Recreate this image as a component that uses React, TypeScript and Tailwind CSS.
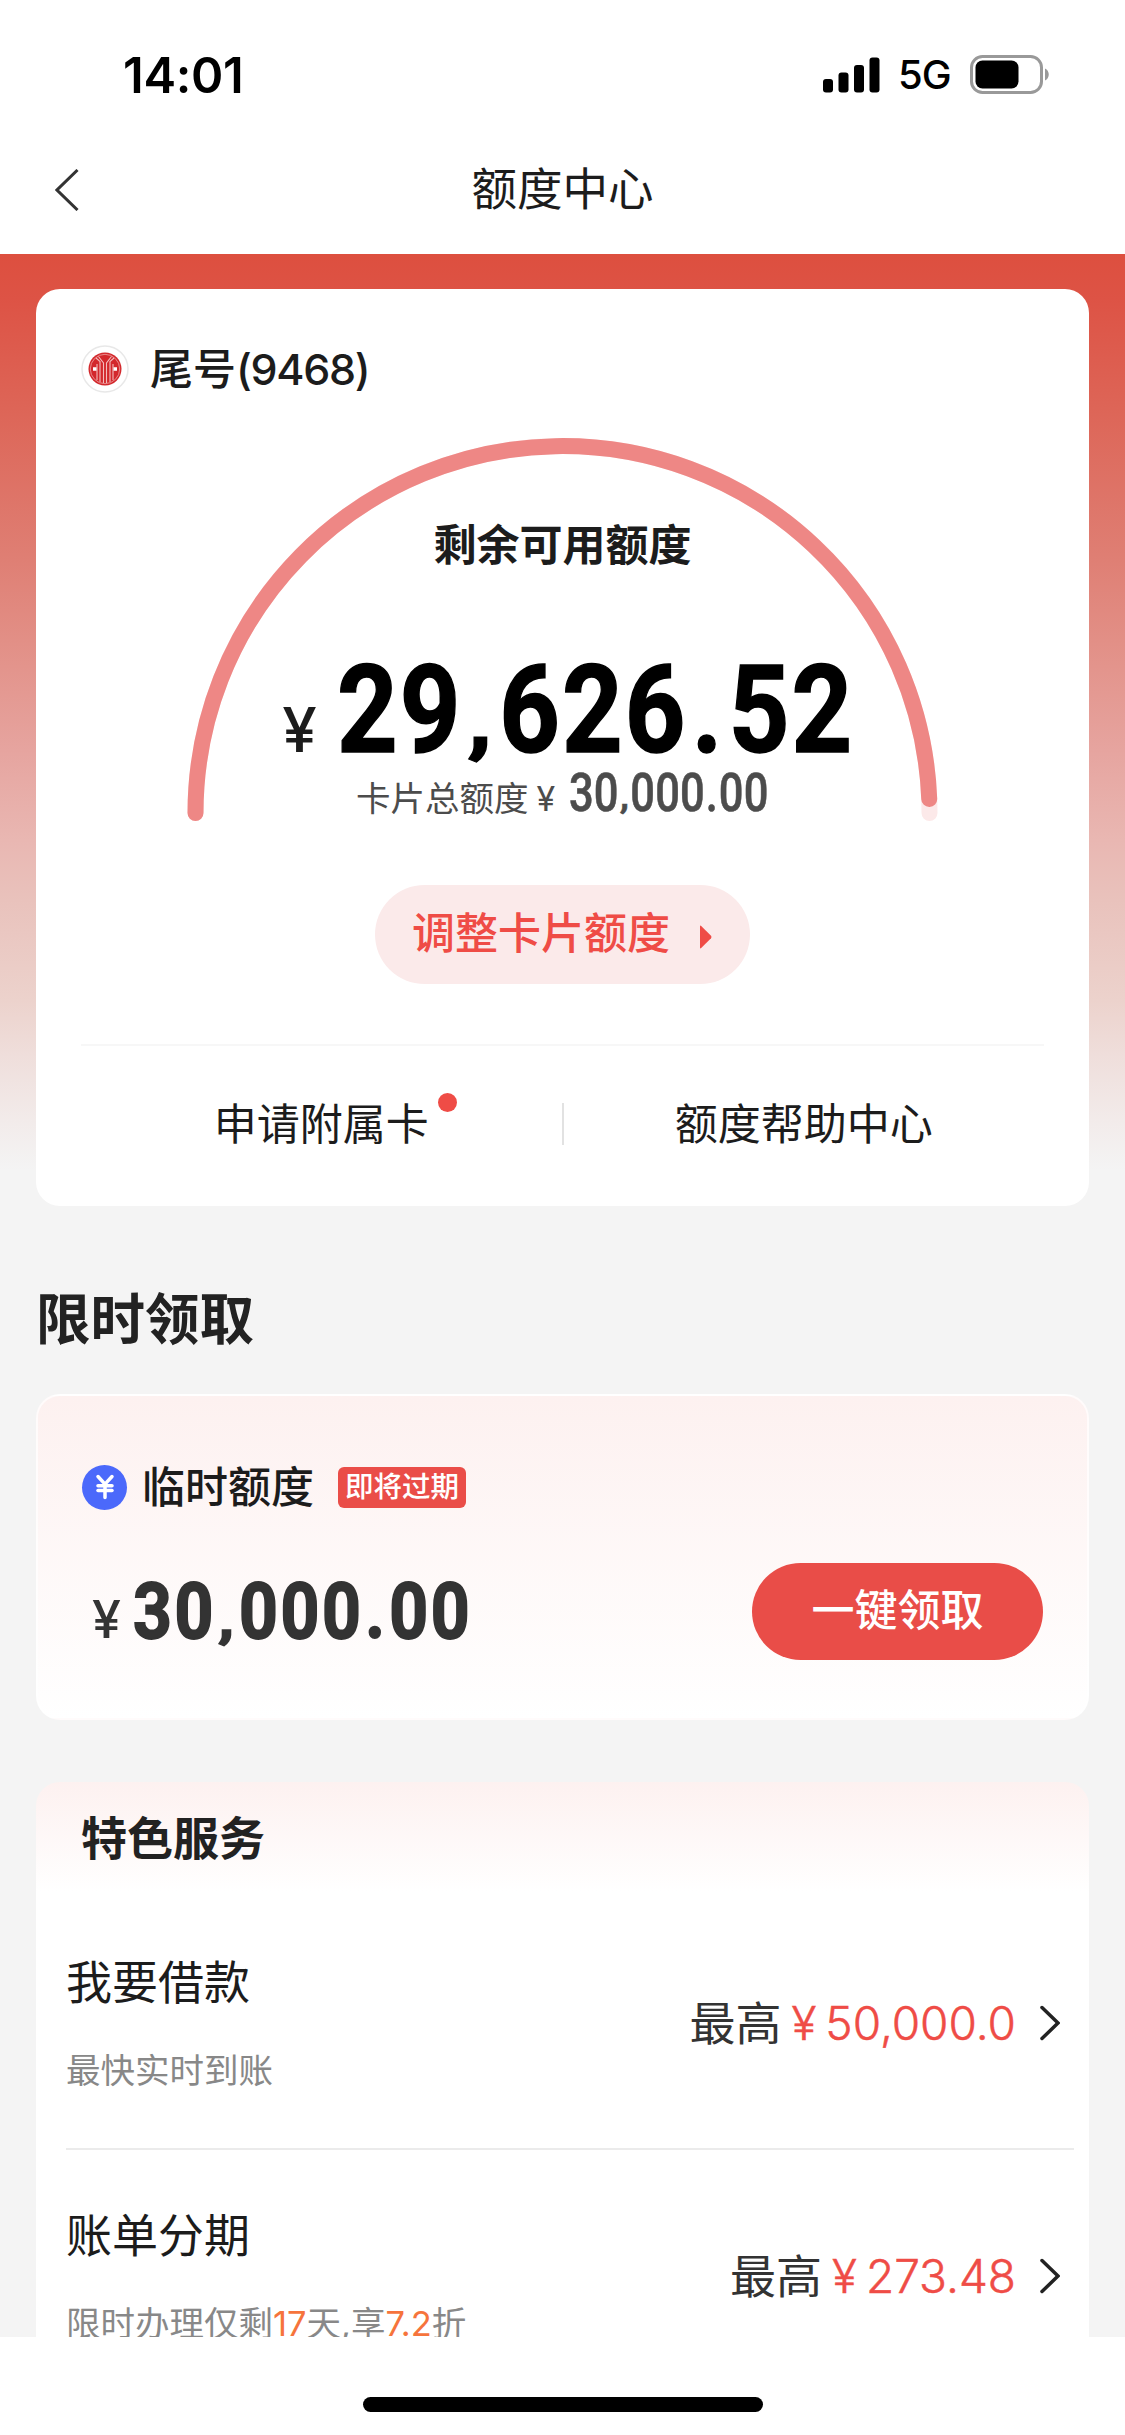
import { JapaneseYen } from "lucide-react";

interface Service {
  id: string;
  title: string;
  desc: React.ReactNode;
  amount: string;
}

const services: Service[] = [
  { id: "loan", title: "我要借款", desc: "最快实时到账", amount: "50,000.0" },
  {
    id: "bill",
    title: "账单分期",
    desc: (
      <>
        限时办理仅剩<span className="text-[#f6743c]">17</span>天,享
        <span className="text-[#f6743c]">7.2</span>折
      </>
    ),
    amount: "273.48",
  },
];

const StatusBar = () => (
  <div className="flex h-[126px] items-center justify-between pt-[24px] pr-[75px] pl-[123px]">
    <span className="text-[49px] leading-none font-semibold tracking-[-0.3px] text-black">14:01</span>
    <div className="flex items-center">
      <svg width="57" height="36" viewBox="0 0 57 36" fill="#000">
        <rect x="0" y="22" width="10" height="13.5" rx="3" />
        <rect x="15.5" y="15.5" width="10" height="20" rx="3" />
        <rect x="31" y="8" width="10" height="27.5" rx="3" />
        <rect x="46.5" y="0.5" width="10" height="35" rx="3" />
      </svg>
      <span className="ml-[18px] w-[53px] text-[40px] leading-none font-medium tracking-[-1px] text-black">5G</span>
      <svg className="ml-[19px]" width="80" height="40" viewBox="0 0 80 40">
        <rect x="1.5" y="1.5" width="70" height="36" rx="11" fill="none" stroke="#999" strokeWidth="3" />
        <rect x="5.5" y="5.5" width="43" height="28" rx="7" fill="#000" />
        <path d="M75 13.5c5 2 5 10 0 12z" fill="#999" />
      </svg>
    </div>
  </div>
);

const BankLogo = () => (
  <svg width="48" height="48" viewBox="0 0 48 48" fill="none">
    <circle cx="24" cy="24" r="23" fill="#fff" stroke="#e8e8e8" strokeWidth="1.5" />
    <circle cx="24" cy="24" r="16.5" fill="#d3282c" />
    <circle cx="24" cy="24" r="14.7" stroke="#eda5a5" strokeWidth="0.8" />
    <path
      d="M19 37V16.5L15 13M22.5 38V18L17.5 11.5M29 37V16.5L33 13M25.5 38V18L30.5 11.5M16 35V19M32 35V19"
      stroke="#f3bcbc"
      strokeWidth="1.1"
    />
    <path d="M12 24h3.5M32.5 24H36" stroke="#fff" strokeWidth="3.5" />
  </svg>
);

const Gauge = () => (
  <svg className="absolute inset-0" width="963" height="399" viewBox="0 0 963 399" fill="none" strokeWidth="16" strokeLinecap="round">
    <path d="M114.5 383a367 367 0 0 1 734 0" stroke="#fce9e9" />
    <path d="M114.5 383a367 367 0 0 1 733.73 -14" stroke="#ee8785" />
  </svg>
);

// condensed digits, with wide separators
const Amount = ({ value, className, gap }: { value: string; className: string; gap: string }) => (
  <span className={`inline-block origin-left whitespace-nowrap ${className}`}>
    {value.split(/([,.])/).map((part, i) => {
      if (part === ",") {
        return (
          <span key={i} className={`inline-block origin-[50%_70%] scale-y-[0.7] ${gap}`}>
            ,
          </span>
        );
      }
      return (
        <span key={i} className={part === "." ? gap : ""}>
          {part}
        </span>
      );
    })}
  </span>
);

const LimitCard = () => (
  <section className="rounded-[24px] bg-white px-[45px] pt-[56px] pb-1">
    <div className="flex h-12 items-center">
      <BankLogo />
      <span className="ml-[21px] text-[43px] leading-none font-medium">
        尾号<span className="tracking-[-1.3px]">(9468)</span>
      </span>
    </div>

    <div className="relative mt-[37px] flex h-[399px] flex-col items-center pt-[85px]">
      <Gauge />
      <h2 className="text-[43px] leading-[60px] font-bold">剩余可用额度</h2>
      <div className="mt-[75px] flex h-[120px] items-baseline leading-[120px]">
        <span className="mr-[20px] text-[62px] font-medium">¥</span>
        <span className="w-[506px] font-['Roboto',sans-serif] text-[123px] font-bold text-black">
          <Amount value="29,626.52" className="scale-x-[0.86] tracking-[2.4px] [-webkit-text-stroke:1.5px]" gap="px-[5px]" />
        </span>
      </div>
      <div className="flex h-[44px] items-baseline pt-px leading-[44px] text-[#4c4c4c]">
        <span className="text-[34.5px]">卡片总额度</span>
        <span className="ml-[8px] text-[34px]">¥</span>
        <span className="ml-[14px] w-[200px] font-['Roboto',sans-serif] text-[53px] font-medium">
          <Amount value="30,000.00" className="scale-x-[0.82] tracking-[0.2px] [-webkit-text-stroke:0.6px]" gap="px-[1px]" />
        </span>
      </div>
    </div>

    <button className="mx-auto mt-[56px] flex h-[99px] w-[375px] items-center rounded-full bg-[#fbeaea] pb-[2px] pl-[37px] text-[43px] font-medium text-[#ef4c46]">
      调整卡片额度
      <svg className="mt-[6px] ml-[30px]" width="12" height="24" viewBox="0 0 12 24" fill="#ef4c46">
        <path d="M0 1.5Q0 0 1.2 1L11 10.8Q12 12 11 13.2L1.2 23Q0 24 0 22.5Z" />
      </svg>
    </button>

    <div className="mt-[60px] flex h-[158px] items-center border-t-2 border-[#f7f7f7] text-[43px]">
      <div className="flex flex-1 justify-center">
        <span className="relative">
          申请附属卡
          <i className="absolute top-px -right-[28px] size-[19px] rounded-full bg-[#ef4c46]" />
        </span>
      </div>
      <div className="h-[42px] w-[2px] bg-[#e2e2e2]" />
      <div className="flex flex-1 justify-center">额度帮助中心</div>
    </div>
  </section>
);

const TempLimitCard = () => (
  <section className="mt-[40px] h-[326px] rounded-[24px] border-2 border-white/70 bg-gradient-to-b from-[#fdf1f0] to-white pt-[61px] pr-[44px] pl-[44px]">
    <div className="flex h-[60px] items-center">
      <span className="flex size-[45px] items-center justify-center rounded-full bg-[#4b69fb]">
        <JapaneseYen className="text-white" size={28} strokeWidth={3} />
      </span>
      <span className="ml-[15px] text-[43px] leading-none font-medium">临时额度</span>
      <span className="ml-[24px] flex h-[41px] w-[128px] items-center justify-center rounded-[6px] bg-[#ea4d48] text-[28.5px] font-medium text-white">
        即将过期
      </span>
    </div>
    <div className="mt-[46px] flex h-[97px] items-center justify-between">
      <div className="flex items-baseline pt-[9px] pl-[10px] leading-[97px] text-[#333]">
        <span className="mr-[12px] text-[52px] font-medium">¥</span>
        <span className="font-['Roboto',sans-serif] text-[77px] font-bold">
          <Amount value="30,000.00" className="scale-x-[0.88] tracking-[3px] [-webkit-text-stroke:1.8px]" gap="px-[2px]" />
        </span>
      </div>
      <button className="h-[97px] w-[291px] shrink-0 rounded-full bg-[#e94d48] pb-[2px] text-[43px] font-medium text-white">一键领取</button>
    </div>
  </section>
);

const ServiceRow = ({ service }: { service: Service }) => (
  <li className="flex h-[253px] items-center justify-between border-b-2 border-[#ebebeb]">
    <div className="pt-[3px]">
      <p className="text-[46px] leading-[60px]">{service.title}</p>
      <p className="mt-[34px] text-[34.5px] leading-[50px] whitespace-nowrap text-[#888]">{service.desc}</p>
    </div>
    <div className="flex items-center pr-[14px] text-[46px] leading-[60px] text-[#333]">
      <span>最高</span>
      <span className="ml-[10px] font-light text-[#ef4c46] [-webkit-text-stroke:0.5px]">¥</span>
      <span className="ml-[9px] font-light text-[#ef4c46] [-webkit-text-stroke:0.5px]">{service.amount}</span>
      <svg className="ml-[24px]" width="20" height="36" viewBox="0 0 20 36" fill="none" stroke="#222" strokeWidth="3.5" strokeLinecap="round">
        <path d="M2 2.5L18 18L2 33.5" />
      </svg>
    </div>
  </li>
);

const App = () => {
  return (
    <div className="flex h-[2435px] w-[1125px] flex-col overflow-hidden bg-white font-['Inter','Noto_Sans_CJK_SC',sans-serif] text-[#1c1c1c]">
      {/* Header */}
      <header className="h-[254px] shrink-0">
        <StatusBar />
        <div className="relative flex h-[128px] items-center justify-center">
          <svg className="absolute left-[55px]" width="24" height="42" viewBox="0 0 24 42" fill="none" stroke="#333" strokeWidth="3">
            <path d="M22.5 1L2 21L22.5 41" />
          </svg>
          <h1 className="text-[45.5px] leading-none">额度中心</h1>
        </div>
      </header>

      {/* Content */}
      <main className="h-[2083px] shrink-0 overflow-hidden bg-[linear-gradient(180deg,#dd4f3f_0,#dd5345_45px,#dd6658_160px,#df7f74_306px,#e28f86_386px,#e6a49f_496px,#e9b7b2_586px,#e9c2bc_646px,#ecd2cc_746px,#efdedb_801px,#f2ebea_866px,#f4f4f4_916px)] px-[36px] pt-[35px]">
        <LimitCard />
        <h2 className="mt-[78px] text-[54.5px] leading-[70px] font-bold text-[#222]">限时领取</h2>
        <TempLimitCard />
        <section className="mt-[62px] rounded-t-[24px] bg-[linear-gradient(180deg,#fdf1f0_0,#fff_110px)] pt-[26px] pr-[15px] pl-[30px]">
          <h2 className="mb-[29px] pl-[15px] text-[46px] leading-[60px] font-bold text-[#222]">特色服务</h2>
          <ul>
            {services.map((service) => (
              <ServiceRow key={service.id} service={service} />
            ))}
          </ul>
        </section>
      </main>

      {/* Home indicator */}
      <div className="mx-auto mt-[60px] h-[15px] w-[400px] rounded-full bg-black" />
    </div>
  );
};

export default App;
